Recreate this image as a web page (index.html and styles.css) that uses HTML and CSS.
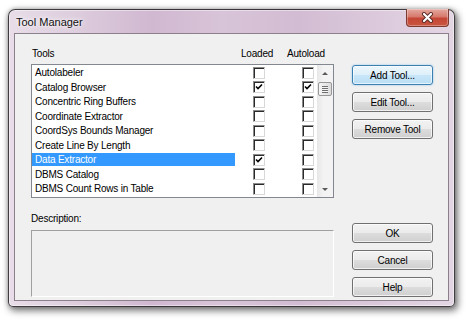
FILE: index.html
```html
<!DOCTYPE html>
<html lang="en">
<head>
    <meta charset="UTF-8">
    <meta name="viewport" content="width=device-width, initial-scale=1.0">
    <title>Tool Manager</title>
    <link rel="stylesheet" href="styles.css">
</head>
<body>
    <div class="window">
        <!-- Title bar -->
        <div class="titlebar">
            <span class="title">Tool Manager</span>
            <button class="close-btn" type="button" aria-label="Close">
                <svg width="13" height="11" viewBox="0 0 13 11">
                    <path d="M3 2 L10 9 M10 2 L3 9" stroke="#5a2a24" stroke-width="4" stroke-linecap="round"/>
                    <path d="M3 2 L10 9 M10 2 L3 9" stroke="#fff" stroke-width="2.2" stroke-linecap="round"/>
                </svg>
            </button>
        </div>

        <div class="client">
            <div class="left-col">
                <div class="list-head">
                    <span class="head-tools">Tools</span>
                    <span class="head-loaded">Loaded</span>
                    <span class="head-auto">Autoload</span>
                </div>

                <!-- Tool list -->
                <div class="listbox">
                    <div class="rows">
                        <div class="row"><span class="name">Autolabeler</span><span class="check loaded"></span><span class="check auto"></span></div>
                        <div class="row"><span class="name">Catalog Browser</span><span class="check loaded"><svg viewBox="0 0 10 10"><path d="M2 4.5 L4 6.5 L8 2.5" stroke="#000" stroke-width="1.6" fill="none"/></svg></span><span class="check auto"><svg viewBox="0 0 10 10"><path d="M2 4.5 L4 6.5 L8 2.5" stroke="#000" stroke-width="1.6" fill="none"/></svg></span></div>
                        <div class="row"><span class="name">Concentric Ring Buffers</span><span class="check loaded"></span><span class="check auto"></span></div>
                        <div class="row"><span class="name">Coordinate Extractor</span><span class="check loaded"></span><span class="check auto"></span></div>
                        <div class="row"><span class="name">CoordSys Bounds Manager</span><span class="check loaded"></span><span class="check auto"></span></div>
                        <div class="row"><span class="name">Create Line By Length</span><span class="check loaded"></span><span class="check auto"></span></div>
                        <div class="row"><span class="name selected">Data Extractor</span><span class="check loaded"><svg viewBox="0 0 10 10"><path d="M2 4.5 L4 6.5 L8 2.5" stroke="#000" stroke-width="1.6" fill="none"/></svg></span><span class="check auto"></span></div>
                        <div class="row"><span class="name">DBMS Catalog</span><span class="check loaded"></span><span class="check auto"></span></div>
                        <div class="row"><span class="name">DBMS Count Rows in Table</span><span class="check loaded"></span><span class="check auto"></span></div>
                    </div>
                    <div class="scrollbar">
                        <span class="arrow-btn"><span class="arrow up"></span></span>
                        <span class="thumb"><span class="grip"></span></span>
                        <span class="track"></span>
                        <span class="arrow-btn"><span class="arrow down"></span></span>
                    </div>
                </div>

                <div class="desc-label">Description:</div>
                <div class="desc-box"></div>
            </div>

            <div class="right-col">
                <div class="btn-group">
                    <button type="button" class="btn default">Add Tool...</button>
                    <button type="button" class="btn">Edit Tool...</button>
                    <button type="button" class="btn">Remove Tool</button>
                </div>
                <div class="btn-group">
                    <button type="button" class="btn">OK</button>
                    <button type="button" class="btn">Cancel</button>
                    <button type="button" class="btn">Help</button>
                </div>
            </div>
        </div>
    </div>
</body>
</html>
```

FILE: styles.css
```css
body {
    margin: 0;
    width: 466px;
    height: 321px;
    overflow: hidden;
    background-color: #fff;
    font-family: "Liberation Sans", Arial, sans-serif;
    font-size: 10px;
    letter-spacing: -0.2px;
    color: #000;
}

.window {
    box-sizing: border-box;
    width: 447px;
    height: 298px;
    margin: 9px 0 0 8px;
    padding: 0 5px 5px;
    display: flex;
    flex-direction: column;
    border: 1px solid rgba(0, 0, 0, 0.72);
    border-radius: 7px 7px 5px 5px;
    background: linear-gradient(to right, #e8dde8 0%, #ddcddd 15%, #d0b8d1 32%, #d8c4d8 48%, #d2bcd3 65%, #dbc9db 82%, #e3d6e3 100%);
    box-shadow: inset 0 0 0 1px rgba(255, 255, 255, 0.45), 2px 3px 7px 1px rgba(0, 0, 0, 0.5), 0 0 4px rgba(0, 0, 0, 0.25);
}

.titlebar {
    height: 24px;
    display: flex;
    justify-content: space-between;
    align-items: flex-start;
}

.title {
    padding: 4px 0 0 2px;
    line-height: 16px;
    font-size: 11px;
    letter-spacing: 0;
    color: #111;
    text-shadow: 0 0 6px #fff, 0 0 3px #fff;
}

.close-btn {
    width: 43px;
    height: 18px;
    margin-top: -1px;
    padding: 0;
    display: flex;
    align-items: center;
    justify-content: center;
    border: 1px solid #7c3a33;
    border-top: none;
    border-radius: 0 0 4px 4px;
    background: linear-gradient(#e4a89f 0%, #d77a6c 45%, #c44636 55%, #c9563f 100%);
    box-shadow: inset 0 0 0 1px rgba(255, 255, 255, 0.3);
}

.client {
    flex: 1;
    display: flex;
    padding: 0 15px 3px 16px;
    border: 1px solid #8d808d;
    background-color: #f0f0f0;
}

.left-col {
    width: 303px;
    display: flex;
    flex-direction: column;
}

.list-head {
    height: 30px;
    display: flex;
    box-sizing: border-box;
    padding-top: 13px;
    line-height: 14px;
}

.head-tools {
    width: 210px;
    padding-left: 1px;
    box-sizing: border-box;
}

.head-loaded {
    width: 46px;
}

.listbox {
    height: 134px;
    box-sizing: border-box;
    display: flex;
    border: 1px solid #828790;
    background-color: #fff;
}

.rows {
    width: 285px;
}

.row {
    height: 14px;
    display: flex;
    align-items: center;
}

.row:nth-child(odd) {
    height: 15px;
}

.name {
    width: 203px;
    height: 13px;
    line-height: 13px;
    padding-left: 3px;
    box-sizing: border-box;
    white-space: nowrap;
}

.name.selected {
    background-color: #3399ff;
    color: #fff;
}

.check {
    width: 12px;
    height: 12px;
    box-sizing: border-box;
    display: flex;
    align-items: center;
    justify-content: center;
    border: 1px solid;
    border-color: #8a8a8a #d8d8d8 #d8d8d8 #8a8a8a;
    box-shadow: inset 1px 1px 0 #2a2a2a;
    background-color: #fff;
}

.check svg {
    width: 10px;
    height: 10px;
}

.check.loaded {
    margin-left: 18px;
}

.check.auto {
    margin-left: 37px;
}

.scrollbar {
    width: 16px;
    display: flex;
    flex-direction: column;
    background: linear-gradient(to right, #e7e7e7, #f3f3f3 40%, #f3f3f3);
}

.arrow-btn {
    height: 16px;
    display: flex;
    align-items: center;
    justify-content: center;
}

.arrow {
    width: 0;
    height: 0;
    border-left: 3px solid transparent;
    border-right: 3px solid transparent;
}

.arrow.up {
    border-bottom: 3px solid #5a5a5a;
}

.arrow.down {
    border-top: 3px solid #5a5a5a;
}

.thumb {
    height: 14px;
    margin: 1px 1px 0;
    box-sizing: border-box;
    display: flex;
    align-items: center;
    justify-content: center;
    border: 1px solid #979797;
    border-radius: 2px;
    background: linear-gradient(to right, #f5f5f5, #e9e9e9 50%, #dcdcdc);
}

.grip {
    width: 6px;
    height: 7px;
    background: repeating-linear-gradient(#6f6f6f 0, #6f6f6f 1px, #f4f4f4 1px, #f4f4f4 2px);
}

.track {
    flex: 1;
}

.desc-label {
    margin-top: 14px;
    line-height: 14px;
}

.desc-box {
    height: 67px;
    margin-top: 4px;
    box-sizing: border-box;
    border: 1px solid;
    border-color: #a0a0a0 #fff #fff #a0a0a0;
}

.right-col {
    width: 81px;
    margin-left: 18px;
    padding-top: 31px;
    display: flex;
    flex-direction: column;
    justify-content: space-between;
}

.btn-group {
    display: flex;
    flex-direction: column;
    gap: 7px;
}

.btn {
    height: 20px;
    padding: 0;
    font-family: inherit;
    font-size: 10px;
    letter-spacing: -0.2px;
    color: #000;
    border: 1px solid #707070;
    border-radius: 3px;
    background: linear-gradient(#f2f2f2 0%, #ebebeb 50%, #dddddd 50%, #cfcfcf 100%);
    box-shadow: inset 0 0 0 1px rgba(255, 255, 255, 0.7);
}

.btn.default {
    border-color: #3c7fb1;
    background: linear-gradient(#eef7fd 0%, #ddeffa 50%, #c9e6f8 50%, #b9def5 100%);
    box-shadow: inset 0 0 0 1px rgba(255, 255, 255, 0.6), 0 0 2px rgba(60, 160, 230, 0.6);
}
```
